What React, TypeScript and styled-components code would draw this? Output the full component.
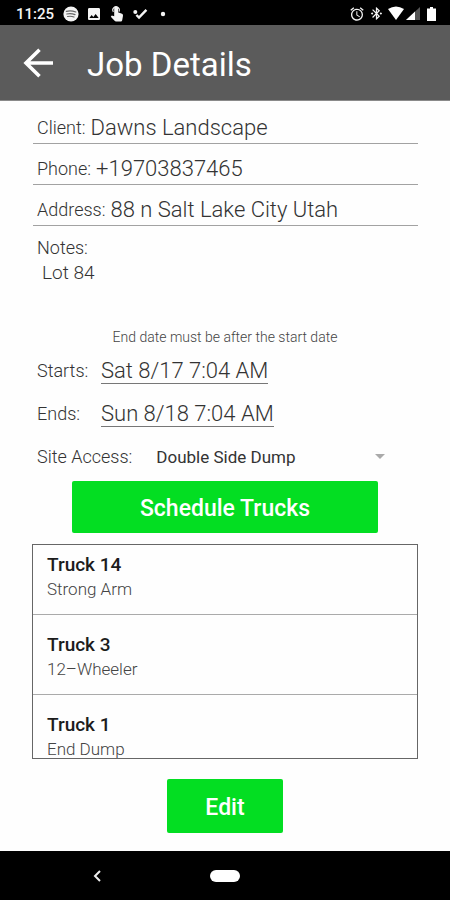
import React from "react";
import styled, { createGlobalStyle } from "styled-components";
import { MdAlarm, MdBluetoothConnected, MdImage } from "react-icons/md";

const GlobalStyle = createGlobalStyle`
  *, *::before, *::after { box-sizing: border-box; }
  body { margin: 0; background: #fff; }
  body, input, textarea, select, button { font-family: Roboto, "Noto Sans", sans-serif; }
`;

const Screen = styled.div`
  display: flex;
  flex-direction: column;
  min-height: 100vh;
  background: #fefefe;
  color: #333;
`;

const StatusBar = styled.div`
  display: flex;
  align-items: center;
  justify-content: space-between;
  height: 25px;
  padding: 2px 14px 0 16px;
  background: #000;
  color: #f4f4f4;
  font-size: 15px;
  font-weight: 500;
`;

const StatusGroup = styled.div<{ $gap: number }>`
  display: flex;
  align-items: center;
  gap: ${(p) => p.$gap}px;
  svg { display: block; }
`;

const Clock = styled.time`
  margin-right: 2px;
`;

const Header = styled.header`
  display: flex;
  align-items: center;
  gap: 33px;
  height: 76px;
  padding: 4px 20px 0 22px;
  background: #5b5b5b;
  border-bottom: 1px solid #8a8a8a;
  color: #fff;
`;

const BackButton = styled.button`
  display: flex;
  padding: 0 0 4px;
  border: 0;
  background: none;
  color: inherit;
  cursor: pointer;
`;

const Title = styled.h1`
  margin: 0;
  font-size: 33px;
  font-weight: 400;
`;

const Main = styled.main`
  flex: 1;
  display: flex;
  flex-direction: column;
  padding: 2px 32px 17px;
`;

const Label = styled.label`
  flex: none;
  font-size: 18px;
  line-height: 24px;
  font-weight: 300;
`;

const Field = styled.div`
  display: flex;
  align-items: center;
  gap: 5px;
  height: 41px;
  margin-left: 1px;
  padding: 9px 0 0 4px;
  border-bottom: 1px solid #a2a2a2;
`;

const FieldInput = styled.input`
  flex: 1;
  min-width: 0;
  padding: 0;
  border: 0;
  outline: 0;
  background: none;
  color: #333;
  font-size: 22px;
  line-height: 28px;
  font-weight: 300;
`;

const Notes = styled.div`
  display: flex;
  flex-direction: column;
  padding: 10px 5px 0;
`;

const NotesInput = styled.textarea`
  height: 65px;
  padding: 1px 5px;
  border: 0;
  outline: 0;
  resize: none;
  background: none;
  color: #333;
  font-size: 19px;
  line-height: 24px;
  font-weight: 300;
`;

const Hint = styled.p`
  margin: 0;
  text-align: center;
  color: #444;
  font-size: 14px;
  line-height: 24px;
  font-weight: 300;
`;

const Row = styled.div`
  display: flex;
  align-items: center;
  height: 43px;
  padding: 0 5px;
`;

const DateLabel = styled(Label)`
  width: 64px;
`;

const DateButton = styled.button`
  padding: 2px 0 0;
  border: 0;
  border-bottom: 1px solid #777;
  background: none;
  color: #333;
  font-size: 22px;
  line-height: 24px;
  font-weight: 300;
  cursor: pointer;
`;

const SelectWrap = styled.div`
  flex: 1;
  display: flex;
  align-items: center;
  margin: 0 28px 0 24px;
`;

const Select = styled.select`
  flex: 1;
  min-width: 0;
  padding: 0;
  border: 0;
  outline: 0;
  appearance: none;
  background: none;
  color: #333;
  font-size: 17px;
  line-height: 24px;
  font-weight: 400;
`;

const GreenButton = styled.button<{ $wide?: boolean }>`
  align-self: center;
  width: ${(p) => (p.$wide ? "306px" : "116px")};
  max-width: 100%;
  height: ${(p) => (p.$wide ? "52px" : "54px")};
  margin-top: ${(p) => (p.$wide ? "3px" : "20px")};
  padding: 3px 0 0;
  border: 0;
  border-radius: 2px;
  background: #03de22;
  color: #fff;
  font-size: 23px;
  line-height: 32px;
  font-weight: 500;
  cursor: pointer;
`;

const TruckList = styled.ul`
  height: 215px;
  margin: 11px 0 0;
  padding: 0;
  list-style: none;
  overflow-y: auto;
  scrollbar-width: none;
  border: 1px solid #666;
`;

const Truck = styled.li`
  padding: 18px 14px 13px;
  border-bottom: 1px solid #aaa;
  line-height: 24px;
  &:first-child { padding-top: 8px; }
`;

const TruckName = styled.div`
  color: #1c1c1c;
  font-size: 19px;
  font-weight: 500;
`;

const TruckKind = styled.div`
  color: #444;
  font-size: 17px;
  font-weight: 300;
`;

const NavBar = styled.nav`
  display: grid;
  grid-template-columns: 1fr auto 1fr;
  align-items: center;
  height: 49px;
  background: #000;
`;

const NavButton = styled.button`
  justify-self: center;
  display: flex;
  padding: 0;
  border: 0;
  background: none;
  cursor: pointer;
`;

const NavBack = styled(NavButton)`
  padding-right: 16px;
`;

const HomePill = styled.span`
  width: 30px;
  height: 12px;
  border-radius: 6px;
  background: #fff;
`;

const ChatIcon = () => (
  <svg width="16" height="16" viewBox="0 0 16 16" aria-hidden="true">
    <circle cx="8" cy="8" r="7.6" fill="#f4f4f4" />
    <path d="M3.3 5.3Q8 4 12.8 6M3.8 8Q8 7 12 8.6M4.5 10.5Q8 9.8 11 11" fill="none" stroke="#666" strokeWidth="1.2" strokeLinecap="round" />
  </svg>
);

const TouchIcon = () => (
  <svg width="16" height="16" viewBox="-1 0 16 16" aria-hidden="true">
    <path d="M4.2 1.6Q6 0 8 1.6V6.2L12 7.8Q13.2 8.4 13 9.8L12.2 14.2Q12 15.4 10.8 15.4H6Q5.2 15.4 4.6 14.8L.8 10.8L1.8 9.4L4.2 10.2Z" fill="#f4f4f4" />
    <path d="M3.4 5.8A3.2 3.2 0 1 1 8.8 5.6" fill="none" stroke="#f4f4f4" strokeWidth="1.2" />
  </svg>
);

const CheckIcon = () => (
  <svg width="18" height="12" viewBox="-1 0 18 12" aria-hidden="true">
    <circle cx="2.3" cy="4" r="2" fill="#f4f4f4" />
    <path d="M3.4 7L6 9.6L13.4 1.8" fill="none" stroke="#f4f4f4" strokeWidth="2.4" />
  </svg>
);

const DotIcon = () => (
  <svg width="12" height="6" viewBox="0 0 12 6" aria-hidden="true">
    <circle cx="6" cy="3" r="2.2" fill="#f4f4f4" />
  </svg>
);

const NetworkIcon = () => (
  <svg width="32" height="15" viewBox="0 0 32 15" aria-hidden="true">
    <path d="M0 3Q8 -2 16 3L8 14Z" fill="#fff" />
    <path d="M32 1V14H18Z" fill="#555" />
    <path d="M27 5.6V14H18Z" fill="#fff" />
  </svg>
);

const BatteryIcon = () => (
  <svg width="12" height="14" viewBox="-3 0 12 14" aria-hidden="true">
    <path d="M3 0H6V1.5H9V14H0V1.5H3Z" fill="#fff" />
  </svg>
);

const BackArrow = () => (
  <svg width="32" height="30" viewBox="0 0 32 30" fill="none" stroke="#fff" strokeWidth="3.6" aria-hidden="true">
    <path d="M31 15H4M17.5 1.8L4 15L17.5 28.2" />
  </svg>
);

const fields = [
  { id: "client", label: "Client:", value: "Dawns Landscape" },
  { id: "phone", label: "Phone:", value: "+19703837465" },
  { id: "address", label: "Address:", value: "88 n Salt Lake City Utah" },
];

const dates = [
  { id: "starts", label: "Starts:", value: "Sat 8/17 7:04 AM" },
  { id: "ends", label: "Ends:", value: "Sun 8/18 7:04 AM" },
];

const trucks = [
  { name: "Truck 14", kind: "Strong Arm" },
  { name: "Truck 3", kind: "12–Wheeler" },
  { name: "Truck 1", kind: "End Dump" },
];

export default function App() {
  return (
    <Screen>
      <GlobalStyle />
      <StatusBar>
        <StatusGroup $gap={7}>
          <Clock>11:25</Clock>
          <ChatIcon />
          <MdImage size={16} />
          <TouchIcon />
          <CheckIcon />
          <DotIcon />
        </StatusGroup>
        <StatusGroup $gap={4}>
          <MdAlarm size={16} />
          <MdBluetoothConnected size={15} />
          <NetworkIcon />
          <BatteryIcon />
        </StatusGroup>
      </StatusBar>
      <Header>
        <BackButton aria-label="Back">
          <BackArrow />
        </BackButton>
        <Title>Job Details</Title>
      </Header>
      <Main>
        {fields.map((f) => (
          <Field key={f.id}>
            <Label htmlFor={f.id}>{f.label}</Label>
            <FieldInput id={f.id} defaultValue={f.value} />
          </Field>
        ))}
        <Notes>
          <Label htmlFor="notes">Notes:</Label>
          <NotesInput id="notes" defaultValue="Lot 84" />
        </Notes>
        <Hint>End date must be after the start date</Hint>
        {dates.map((d) => (
          <Row key={d.id}>
            <DateLabel htmlFor={d.id}>{d.label}</DateLabel>
            <DateButton id={d.id}>{d.value}</DateButton>
          </Row>
        ))}
        <Row>
          <Label htmlFor="access">Site Access:</Label>
          <SelectWrap>
            <Select id="access" defaultValue="Double Side Dump">
              <option>Double Side Dump</option>
              <option>End Dump</option>
            </Select>
            <svg width="10" height="5" viewBox="0 0 10 5" aria-hidden="true">
              <path d="M0 0H10L5 5Z" fill="#aaa" />
            </svg>
          </SelectWrap>
        </Row>
        <GreenButton $wide>Schedule Trucks</GreenButton>
        <TruckList>
          {trucks.map((t) => (
            <Truck key={t.name}>
              <TruckName>{t.name}</TruckName>
              <TruckKind>{t.kind}</TruckKind>
            </Truck>
          ))}
        </TruckList>
        <GreenButton>Edit</GreenButton>
      </Main>
      <NavBar>
        <NavBack aria-label="Back">
          <svg width="8" height="12" viewBox="0 0 8 12" fill="none" stroke="#eee" strokeWidth="2" aria-hidden="true">
            <path d="M7 1L2 6L7 11" />
          </svg>
        </NavBack>
        <NavButton aria-label="Home">
          <HomePill />
        </NavButton>
      </NavBar>
    </Screen>
  );
}
